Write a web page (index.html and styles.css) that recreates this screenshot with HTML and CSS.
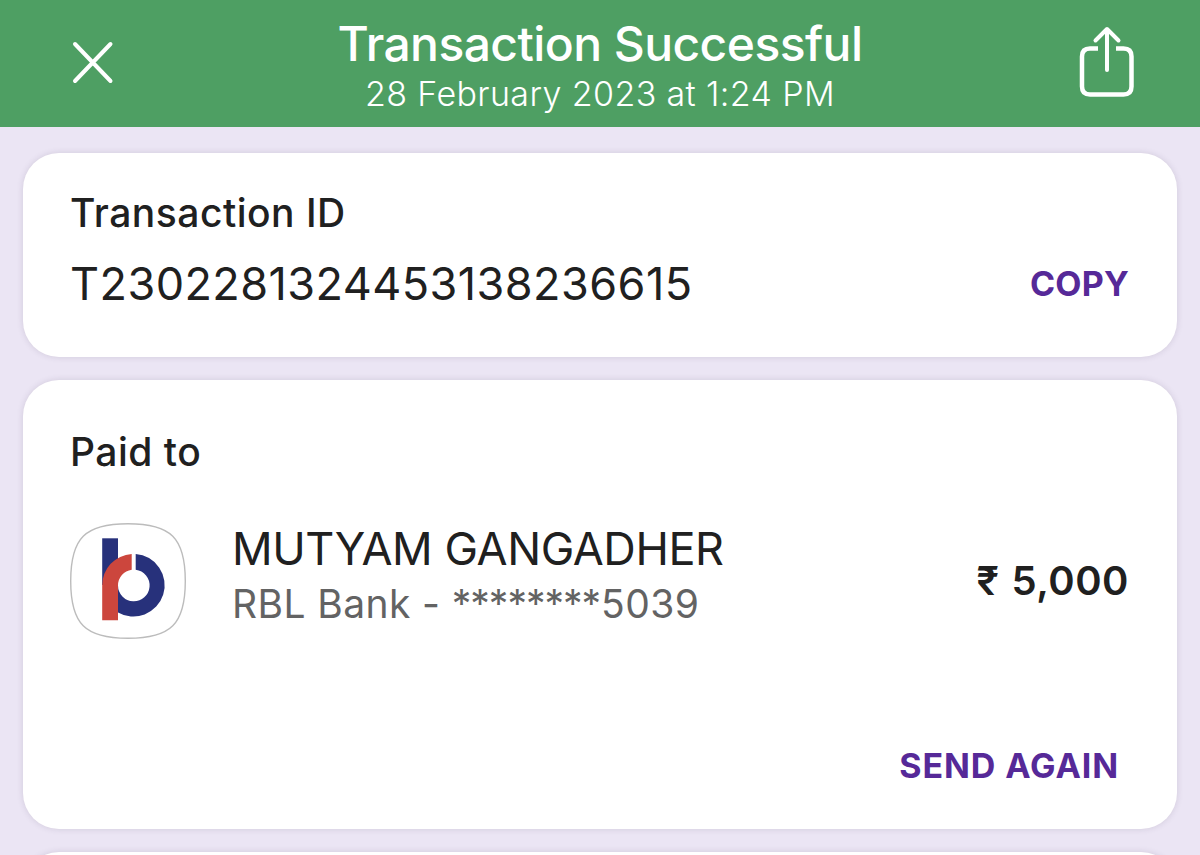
FILE: index.html
```html
<!DOCTYPE html>
<html lang="en">
<head>
    <meta charset="UTF-8">
    <meta name="viewport" content="width=device-width, initial-scale=1.0">
    <title>Transaction Successful</title>
    <link rel="stylesheet" href="styles.css">
</head>
<body>
    <header class="topBar">
        <svg class="closeIcon" width="44" height="44" viewBox="0 0 44 44">
            <path d="M4 4L39.500 41M39.500 4L4 41"/>
        </svg>
        <div class="heading">
            <h1>Transaction Successful</h1>
            <p class="date">28 February 2023 at 1:24 PM</p>
        </div>
        <svg class="shareIcon" width="60" height="76" viewBox="0 0 60 76">
            <path class="tray" d="M21 25.500H13Q5 25.500 5 33.500V63.500Q5 71.500 13 71.500H46.500Q54.500 71.500 54.500 63.500V33.500Q54.500 25.500 46.500 25.500H39"/>
            <path class="arrow" d="M30 47V6.500M18.500 17.500L30 6L41.500 17.500"/>
        </svg>
    </header>

    <main>
        <section class="card idCard">
            <h2>Transaction ID</h2>
            <div class="idRow">
                <span class="number">T2302281324453138236615</span>
                <a class="copy">COPY</a>
            </div>
        </section>

        <section class="card paidCard">
            <h2 class="paid">Paid to</h2>
            <div class="payee">
                <svg class="bank" width="116" height="116" viewBox="0 0 116 116">
                    <path class="frame" d="M58 .7C101 .7 115.300 15 115.300 58S101 115.300 58 115.300S.7 101 .7 58S15 .7 58 .7Z"/>
                    <path class="blue" d="M32.200 15.300H48V62H32.200Z"/>
                    <path class="blue" d="M65.700 31A31.300 31.300 0 1 1 47.500 89.200V62.500H48A15.800 15.800 0 1 0 65.700 46.800Z"/>
                    <path class="red" d="M61.700 31V46.800A15.800 15.800 0 0 0 48 62.500V97.300H32.200V62.500A31.300 31.300 0 0 1 61.700 31Z"/>
                </svg>
                <div class="who">
                    <div class="name">MUTYAM GANGADHER</div>
                    <div class="account">RBL Bank - <span class="stars">********</span>5039</div>
                </div>
                <div class="amount"><span class="rupee">₹</span>5,000</div>
            </div>
            <a class="again">SEND AGAIN</a>
        </section>

        <section class="card nextCard"></section>
    </main>
</body>
</html>
```
FILE: styles.css
```css
*{padding: 0; margin: 0; box-sizing: border-box;}

body{
    background-color: #ebe5f4;
    color: #202020;
    font-family: Inter, "Liberation Sans", sans-serif;
}
svg{fill: none; flex-shrink: 0;}

/* header */
.topBar{
    height: 127px;
    padding: 0 63px 0 71px;
    display: flex;
    justify-content: space-between;
    background-color: #4e9f63;
    color: white;
}
.closeIcon{
    margin: 40px 8px 0 0;
    stroke: white;
    stroke-width: 4;
    stroke-linecap: round;
}
.shareIcon{
    margin-top: 23px;
    stroke: white;
    stroke-linecap: round;
    stroke-linejoin: round;
}
.tray{stroke-width: 4.5; stroke-linecap: butt;}
.arrow{stroke-width: 4;}
.heading{
    padding-top: 20px;
    text-align: center;
}
h1{
    font-size: 48px;
    font-weight: 500;
    line-height: 48px;
    letter-spacing: -0.57px;
}
.date{
    font-size: 34px;
    font-weight: 300;
    line-height: 51px;
    letter-spacing: 0.38px;
}

/* cards */
main{
    height: 728px;
    padding: 26px 23px 0;
    display: flex;
    flex-direction: column;
    gap: 23px;
    overflow: hidden;
}
.card{
    padding: 0 48px 0 47px;
    flex-shrink: 0;
    background-color: white;
    border-radius: 36px;
    box-shadow: 0 0 6px rgba(60,50,80,0.15);
}
h2{
    font-size: 39px;
    font-weight: 500;
    line-height: 50px;
    letter-spacing: 0.5px;
}
.idCard{
    height: 204px;
    padding-top: 35px;
}
.idRow{
    margin-top: 15px;
    display: flex;
    justify-content: space-between;
    line-height: 61px;
}
.number{
    font-size: 45px;
    letter-spacing: 0.45px;
}
.copy, .again{
    color: #562998;
    font-size: 34px;
    font-weight: 700;
}
.copy{letter-spacing: 0.2px;}
.paidCard{
    height: 449px;
    padding-top: 47px;
}
.payee{
    margin-top: 46px;
    height: 116px;
    display: flex;
}
.frame{stroke: #bcbcbc; stroke-width: 1.4;}
.blue{fill: #27317b;}
.red{fill: #cc463d;}
.who{
    margin: -1px 0 0 46px;
    white-space: nowrap;
}
.name{
    font-size: 45px;
    line-height: 54px;
    letter-spacing: -0.45px;
}
.account{
    color: #636363;
    font-size: 39px;
    line-height: 56px;
    letter-spacing: 0.4px;
}
.stars{
    margin: 0 1px 0 0;
    letter-spacing: -1px;
}
.amount{
    margin-left: auto;
    font-size: 40px;
    font-weight: 600;
    line-height: 116px;
    letter-spacing: 0.5px;
}
.rupee{margin-right: 12px;}
.again{
    margin: 102px 10px 0 0;
    display: block;
    line-height: 50px;
    letter-spacing: 0.9px;
    text-align: right;
}
.nextCard{height: 200px;}
```
